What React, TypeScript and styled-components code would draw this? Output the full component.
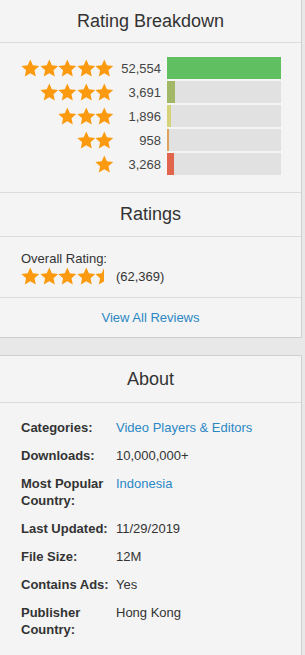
import React from "react";
import styled, { createGlobalStyle } from "styled-components";

const Global = createGlobalStyle`
  html, body { margin: 0; padding: 0; }
  body {
    background: #e8e8e8;
    font-family: "Liberation Sans", Arial, sans-serif;
    color: #333;
    width: 305px;
    overflow: hidden;
  }
`;

const Page = styled.div`
  display: flex;
  flex-direction: column;
  gap: 17px;
  width: 302px;
`;

const Panel = styled.section<{ $top?: boolean }>`
  background: #f4f4f4;
  border-right: 1px solid #cfcfcf;
  border-bottom: 1px solid #cfcfcf;
  border-top: ${(p) => (p.$top ? "1px solid #cfcfcf" : "none")};
`;

const Heading = styled.h2<{ $h: number; $topLine?: boolean }>`
  margin: 0;
  height: ${(p) => p.$h}px;
  display: flex;
  align-items: center;
  justify-content: center;
  font-size: 18px;
  font-weight: normal;
  color: #333;
  border-bottom: 1px solid #dcdcdc;
  border-top: ${(p) => (p.$topLine ? "1px solid #dcdcdc" : "none")};
  box-sizing: border-box;
`;

const Breakdown = styled.div`
  padding: 14px 0 17px 21px;
  display: flex;
  flex-direction: column;
  gap: 2px;
`;

const Row = styled.div`
  display: flex;
  align-items: center;
  height: 22px;
`;

const StarsCell = styled.div`
  width: 93px;
  display: flex;
  justify-content: flex-end;
`;

const Count = styled.div`
  width: 47px;
  text-align: right;
  font-size: 13px;
  color: #444;
`;

const Bar = styled.div`
  width: 114px;
  height: 22px;
  margin-left: 6px;
  background: #e1e1e1;
  display: flex;
`;

const Fill = styled.div<{ $color: string }>`
  height: 100%;
  background: ${(p) => p.$color};
`;

const Overall = styled.div`
  padding: 14px 21px 11px 21px;
  border-bottom: 1px solid #dcdcdc;
  font-size: 13px;
  color: #333;
`;

const OverallLabel = styled.div`
  line-height: 15px;
`;

const OverallStars = styled.div`
  display: flex;
  align-items: center;
  gap: 2px;
  height: 20px;
`;

const StarRow = styled.div`
  display: flex;
`;

const ViewAll = styled.a`
  display: flex;
  justify-content: center;
  align-items: center;
  height: 39px;
  font-size: 13px;
  color: #2b87c4;
  text-decoration: none;
`;

const Details = styled.dl`
  margin: 0;
  padding: 16px 21px 30px 21px;
  display: grid;
  grid-template-columns: 95px 1fr;
  row-gap: 11px;
  font-size: 13px;
  line-height: 17px;
`;

const Term = styled.dt`
  font-weight: bold;
  color: #333;
`;

const Desc = styled.dd<{ $link?: boolean }>`
  margin: 0;
  color: ${(p) => (p.$link ? "#2b87c4" : "#333")};
`;

const STAR_PATH =
  "M12 2.6L14.76 8.8L21.51 9.51L16.47 14.05L17.88 20.69L12 17.3L6.12 20.69L7.53 14.05L2.49 9.51L9.24 8.8Z";

const Star: React.FC<{ fill?: "full" | "half"; id?: string }> = ({ fill = "full", id }) => (
  <svg width="18.6" height="18" viewBox="2.1 2.4 19.8 18.6">
    {fill === "half" && (
      <defs>
        <linearGradient id={id} x1="0" x2="1" y1="0" y2="0">
          <stop offset="50%" stopColor="#fb9a0e" />
          <stop offset="50%" stopColor="#fb9a0e" stopOpacity="0" />
        </linearGradient>
      </defs>
    )}
    <path d={STAR_PATH} fill={fill === "half" ? `url(#${id})` : "#fb9a0e"} />
  </svg>
);

const breakdown = [
  { stars: 5, count: 52554, color: "#60bf61" },
  { stars: 4, count: 3691, color: "#a3b866" },
  { stars: 3, count: 1896, color: "#d5d27a" },
  { stars: 2, count: 958, color: "#dca35e" },
  { stars: 1, count: 3268, color: "#e0654c" },
];

const max = Math.max(...breakdown.map((b) => b.count));

const details: { term: React.ReactNode; desc: string; link?: boolean }[] = [
  { term: "Categories:", desc: "Video Players & Editors", link: true },
  { term: "Downloads:", desc: "10,000,000+" },
  { term: <>Most Popular<br />Country:</>, desc: "Indonesia", link: true },
  { term: "Last Updated:", desc: "11/29/2019" },
  { term: "File Size:", desc: "12M" },
  { term: "Contains Ads:", desc: "Yes" },
  { term: <>Publisher<br />Country:</>, desc: "Hong Kong" },
];

export default function App() {
  return (
    <>
      <Global />
      <Page>
        <Panel>
          <Heading $h={43}>Rating Breakdown</Heading>
          <Breakdown>
            {breakdown.map((b) => (
              <Row key={b.stars}>
                <StarsCell>
                  {Array.from({ length: b.stars }).map((_, i) => (
                    <Star key={i} />
                  ))}
                </StarsCell>
                <Count>{b.count.toLocaleString("en-US")}</Count>
                <Bar>
                  <Fill $color={b.color} style={{ width: `${(b.count / max) * 114}px` }} />
                </Bar>
              </Row>
            ))}
          </Breakdown>
          <Heading $h={45} $topLine>Ratings</Heading>
          <Overall>
            <OverallLabel>Overall Rating:</OverallLabel>
            <OverallStars>
              <StarRow>
                <Star />
                <Star />
                <Star />
                <Star />
                <Star fill="half" id="halfstar" />
              </StarRow>
              <span>(62,369)</span>
            </OverallStars>
          </Overall>
          <ViewAll href="#">View All Reviews</ViewAll>
        </Panel>
        <Panel $top>
          <Heading $h={47}>About</Heading>
          <Details>
            {details.map((d, i) => (
              <React.Fragment key={i}>
                <Term>{d.term}</Term>
                <Desc $link={d.link}>{d.desc}</Desc>
              </React.Fragment>
            ))}
          </Details>
        </Panel>
      </Page>
    </>
  );
}
